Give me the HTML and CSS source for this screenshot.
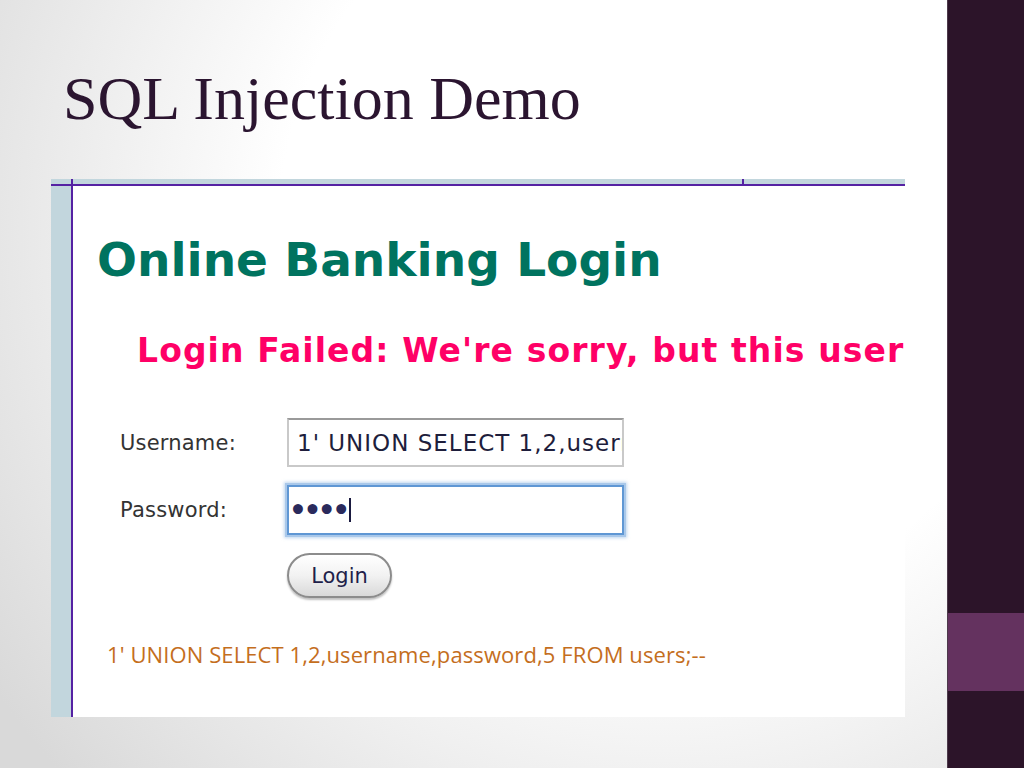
FILE: index.html
```html
<!DOCTYPE html>
<html lang="en">
<head>
<meta charset="utf-8">
<title>SQL Injection Demo</title>
<link rel="stylesheet" href="styles.css">
</head>
<body>
<div class="page">
  <main class="slide">
    <h1 class="title">SQL Injection Demo</h1>
    <div class="shot">
      <h2 class="bank">Online Banking Login</h2>
      <p class="fail">Login Failed: We're sorry, but this username or password was not found in our system.</p>
      <div class="form">
        <span class="label">Username:</span>
        <div class="input">1' UNION SELECT 1,2,username,password,5 FROM users;--</div>
        <span class="label">Password:</span>
        <div class="input focus"><span class="dots">••••</span><span class="caret"></span></div>
        <span></span>
        <button class="btn" type="button">Login</button>
      </div>
      <p class="payload">1' UNION SELECT 1,2,username,password,5 FROM users;--</p>
    </div>
  </main>
  <aside class="side">
    <div class="accent"></div>
  </aside>
</div>
</body>
</html>
```
FILE: styles.css
```css
html, body {
  margin: 0;
  padding: 0;
}

.page {
  display: flex;
  width: 1024px;
  height: 768px;
  overflow: hidden;
}

.slide {
  width: 947px;
  height: 768px;
  box-sizing: border-box;
  padding: 67px 0 0 51px;
  background: radial-gradient(circle farthest-corner at 70% 30%, #ffffff 45%, #d9d9d9 95%);
}

.title {
  margin: 0 0 50px 12px;
  font-family: "Liberation Serif", "Times New Roman", serif;
  font-weight: normal;
  font-size: 62px;
  line-height: 62px;
  color: #2b1530;
}

.shot {
  width: 854px;
  height: 538px;
  box-sizing: border-box;
  padding: 57px 0 0 46px;
  overflow: hidden;
  background:
    linear-gradient(#5522a3, #5522a3) 20px 0 / 2px 100% no-repeat,
    linear-gradient(#5522a3, #5522a3) 691px 0 / 2px 5px no-repeat,
    linear-gradient(#5522a3, #5522a3) 0 5px / 100% 2px no-repeat,
    linear-gradient(#c2d6dd, #c2d6dd) 0 0 / 100% 5px no-repeat,
    linear-gradient(#c2d6dd, #c2d6dd) 0 0 / 20px 100% no-repeat,
    #ffffff;
}

.bank {
  margin: 0;
  font-family: "DejaVu Sans", Verdana, sans-serif;
  font-weight: bold;
  font-size: 47px;
  line-height: 47px;
  color: #00735f;
  white-space: nowrap;
}

.fail {
  margin: 51px 0 0 40px;
  font-family: "DejaVu Sans", Verdana, sans-serif;
  font-weight: bold;
  font-size: 33px;
  line-height: 33px;
  letter-spacing: 1.1px;
  color: #ff0066;
  white-space: nowrap;
}

.form {
  margin: 51px 0 0 23px;
  display: grid;
  grid-template-columns: 167px 337px;
  grid-template-rows: 49px 50px 45px;
  row-gap: 18px;
  align-items: center;
}

.label {
  font-family: "DejaVu Sans", Verdana, sans-serif;
  font-size: 21px;
  letter-spacing: 0.2px;
  color: #333333;
}

.input {
  box-sizing: border-box;
  height: 100%;
  display: flex;
  align-items: center;
  padding-left: 8px;
  border: 2px solid #c9c9c9;
  border-top-color: #9a9a9a;
  background: #fff;
  font-family: "DejaVu Sans", Verdana, sans-serif;
  font-size: 23px;
  letter-spacing: 1px;
  color: #1e1e3c;
  white-space: nowrap;
  overflow: hidden;
}

.input.focus {
  border: 2px solid #5f97d4;
  box-shadow: 0 0 0 2px #a9c8ea, 0 0 3px 3px rgba(130, 175, 225, 0.5);
  padding-left: 0;
  letter-spacing: 0;
}

.dots {
  font-size: 28px;
  font-weight: bold;
  letter-spacing: -3.5px;
  color: #2a2a5c;
}

.caret {
  display: inline-block;
  width: 2px;
  height: 24px;
  margin-left: 2px;
  background: #1a1a40;
}

.btn {
  width: 105px;
  height: 45px;
  padding: 0;
  border: 2px solid #8c8c8c;
  border-radius: 23px;
  background: linear-gradient(#ffffff, #f2f2f2 50%, #d9d9d9);
  box-shadow: 0 2px 2px rgba(0, 0, 0, 0.25);
  font-family: "DejaVu Sans", Verdana, sans-serif;
  font-size: 21px;
  color: #1f1f4a;
}

.payload {
  margin: 45px 0 0 10px;
  font-family: "Open Sans", "Liberation Sans", sans-serif;
  font-size: 22px;
  line-height: 22px;
  letter-spacing: 0.1px;
  color: #c46e1d;
  white-space: nowrap;
}

.side {
  width: 77px;
  height: 768px;
  box-sizing: border-box;
  border-left: 1px solid #4d3a4b;
  background: #2c1429;
  padding-top: 613px;
}

.accent {
  height: 78px;
  background: #64325f;
}
```
